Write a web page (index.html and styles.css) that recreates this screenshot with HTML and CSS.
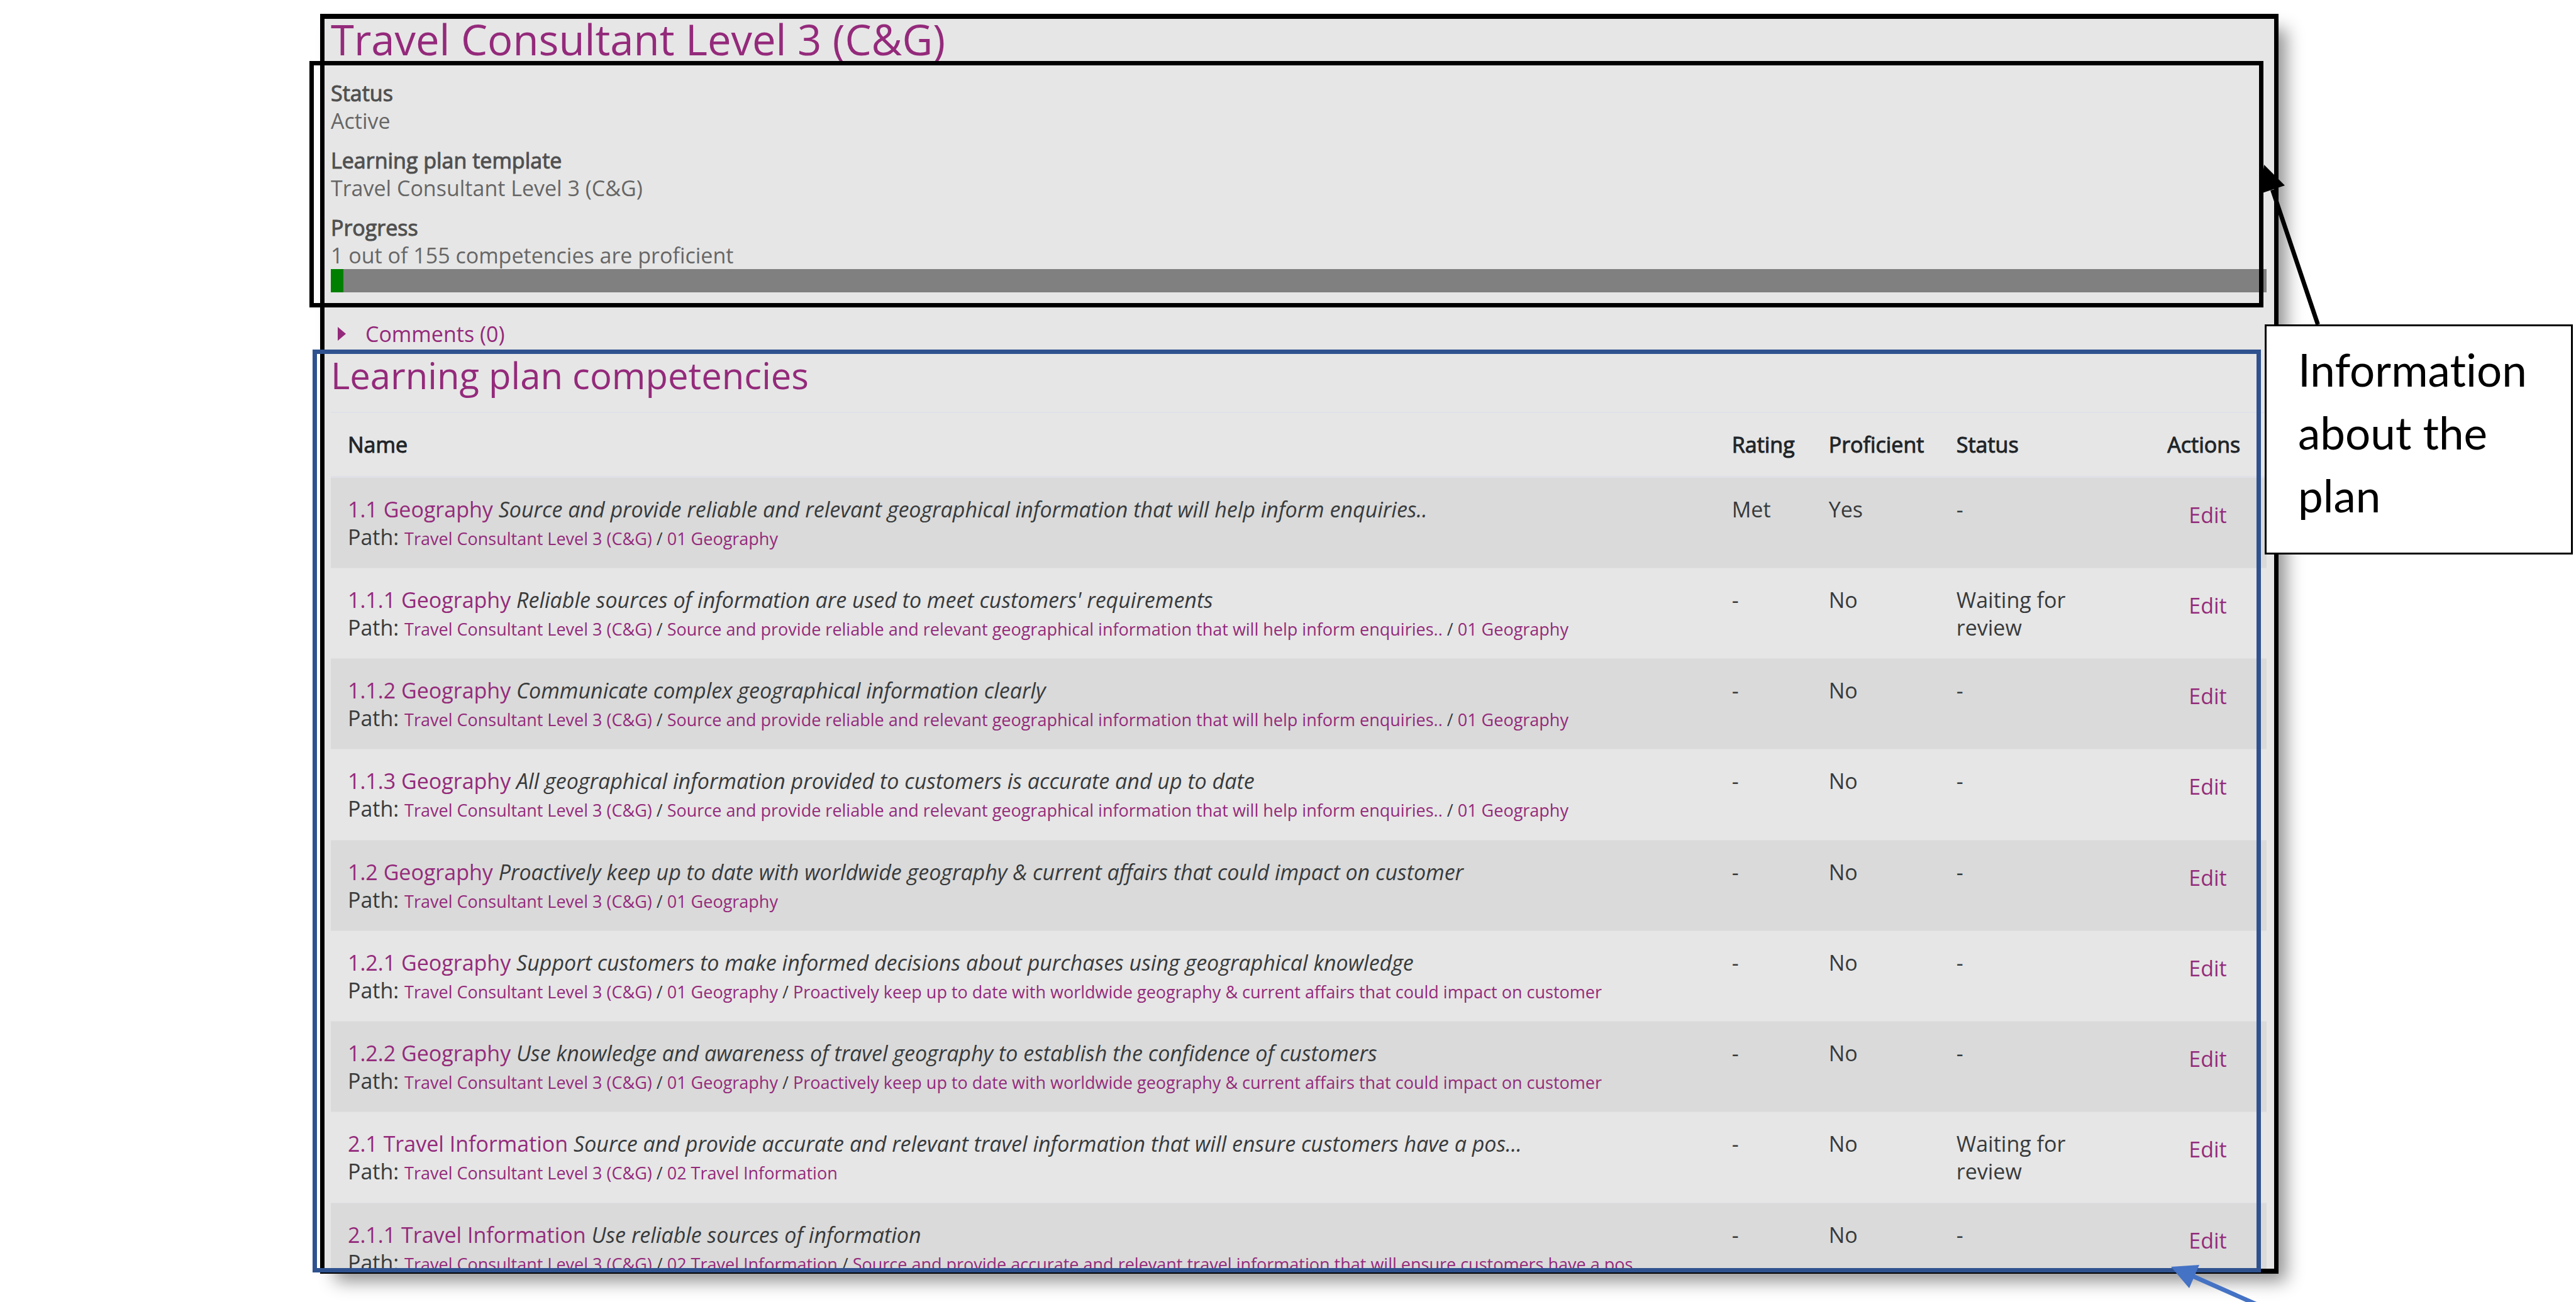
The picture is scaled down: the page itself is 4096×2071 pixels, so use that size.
FILE: index.html
```html
<!DOCTYPE html>
<html lang="en">
<head>
<meta charset="utf-8">
<title>Travel Consultant Level 3 (C&amp;G)</title>
<link rel="stylesheet" href="styles.css">
</head>
<body>
<div class="page">
  <main class="panel">
    <h1>Travel Consultant Level 3 (C&amp;G)</h1>
    <section class="info">
      <dl>
        <div><dt>Status</dt><dd>Active</dd></div>
        <div><dt>Learning plan template</dt><dd>Travel Consultant Level 3 (C&amp;G)</dd></div>
        <div><dt>Progress</dt><dd>1 out of 155 competencies are proficient</dd></div>
      </dl>
      <div class="bar"><div class="bar-fill" style="width:0.645%"></div></div>
    </section>
    <a class="comments" href="#"><svg viewBox="0 0 13 22" aria-hidden="true"><path d="M0 0L13 11L0 22Z"/></svg>Comments (0)</a>
    <section class="competencies">
      <div class="clip">
        <h2>Learning plan competencies</h2>
        <table>
          <colgroup><col class="c-name"><col class="c-rating"><col class="c-prof"><col class="c-status"><col class="c-actions"></colgroup>
          <thead>
            <tr><th>Name</th><th>Rating</th><th>Proficient</th><th>Status</th><th>Actions</th></tr>
          </thead>
          <tbody>
            <tr><td><a href="#">1.1 Geography</a> <em>Source and provide reliable and relevant geographical information that will help inform enquiries..</em><br>Path: <small><a href="#">Travel Consultant Level 3 (C&amp;G)</a> / <a href="#">01 Geography</a></small></td><td>Met</td><td>Yes</td><td>-</td><td><a class="edit" href="#">Edit</a></td></tr>
            <tr><td><a href="#">1.1.1 Geography</a> <em>Reliable sources of information are used to meet customers' requirements</em><br>Path: <small><a href="#">Travel Consultant Level 3 (C&amp;G)</a> / <a href="#">Source and provide reliable and relevant geographical information that will help inform enquiries..</a> / <a href="#">01 Geography</a></small></td><td>-</td><td>No</td><td>Waiting for<br>review</td><td><a class="edit" href="#">Edit</a></td></tr>
            <tr><td><a href="#">1.1.2 Geography</a> <em>Communicate complex geographical information clearly</em><br>Path: <small><a href="#">Travel Consultant Level 3 (C&amp;G)</a> / <a href="#">Source and provide reliable and relevant geographical information that will help inform enquiries..</a> / <a href="#">01 Geography</a></small></td><td>-</td><td>No</td><td>-</td><td><a class="edit" href="#">Edit</a></td></tr>
            <tr><td><a href="#">1.1.3 Geography</a> <em>All geographical information provided to customers is accurate and up to date</em><br>Path: <small><a href="#">Travel Consultant Level 3 (C&amp;G)</a> / <a href="#">Source and provide reliable and relevant geographical information that will help inform enquiries..</a> / <a href="#">01 Geography</a></small></td><td>-</td><td>No</td><td>-</td><td><a class="edit" href="#">Edit</a></td></tr>
            <tr><td><a href="#">1.2 Geography</a> <em>Proactively keep up to date with worldwide geography &amp; current affairs that could impact on customer</em><br>Path: <small><a href="#">Travel Consultant Level 3 (C&amp;G)</a> / <a href="#">01 Geography</a></small></td><td>-</td><td>No</td><td>-</td><td><a class="edit" href="#">Edit</a></td></tr>
            <tr><td><a href="#">1.2.1 Geography</a> <em>Support customers to make informed decisions about purchases using geographical knowledge</em><br>Path: <small><a href="#">Travel Consultant Level 3 (C&amp;G)</a> / <a href="#">01 Geography</a> / <a href="#">Proactively keep up to date with worldwide geography &amp; current affairs that could impact on customer</a></small></td><td>-</td><td>No</td><td>-</td><td><a class="edit" href="#">Edit</a></td></tr>
            <tr><td><a href="#">1.2.2 Geography</a> <em>Use knowledge and awareness of travel geography to establish the confidence of customers</em><br>Path: <small><a href="#">Travel Consultant Level 3 (C&amp;G)</a> / <a href="#">01 Geography</a> / <a href="#">Proactively keep up to date with worldwide geography &amp; current affairs that could impact on customer</a></small></td><td>-</td><td>No</td><td>-</td><td><a class="edit" href="#">Edit</a></td></tr>
            <tr><td><a href="#">2.1 Travel Information</a> <em>Source and provide accurate and relevant travel information that will ensure customers have a pos...</em><br>Path: <small><a href="#">Travel Consultant Level 3 (C&amp;G)</a> / <a href="#">02 Travel Information</a></small></td><td>-</td><td>No</td><td>Waiting for<br>review</td><td><a class="edit" href="#">Edit</a></td></tr>
            <tr><td><a href="#">2.1.1 Travel Information</a> <em>Use reliable sources of information</em><br>Path: <small><a href="#">Travel Consultant Level 3 (C&amp;G)</a> / <a href="#">02 Travel Information</a> / <a href="#">Source and provide accurate and relevant travel information that will ensure customers have a pos...</a></small></td><td>-</td><td>No</td><td>-</td><td><a class="edit" href="#">Edit</a></td></tr>
          </tbody>
        </table>
      </div>
    </section>
  </main>
  <svg class="arrow-info" viewBox="0 0 100 260" aria-hidden="true">
    <path d="M90.5 260L18.4 46" stroke="#000" stroke-width="7"/>
    <path d="M5 6L38 39L-1 52Z" fill="#000"/>
  </svg>
  <aside class="callout">Information about the plan</aside>
  <svg class="arrow-table" viewBox="0 0 160 61" aria-hidden="true">
    <path d="M36 19.500L150 70" stroke="#4472c4" stroke-width="7"/>
    <path d="M2 5L47 2L31 39Z" fill="#4472c4"/>
  </svg>
</div>
</body>
</html>
```
FILE: styles.css
```css
* { box-sizing: border-box; }

body {
  margin: 0;
  background: #fff;
  color: #373a3c;
  font: 34px/44px "Open Sans", "Noto Sans", sans-serif;
}

a { color: #942a7b; text-decoration: none; }

.page {
  position: relative;
  display: flex;
  height: 100vh;
  padding: 22px 473px 45px 509px;
  overflow: hidden;
}

.panel {
  flex: 1;
  min-width: 0;
  display: flex;
  flex-direction: column;
  padding: 0 12px 0 10px;
  background: #e6e6e6;
  border: solid #000;
  border-width: 8px 7px;
  box-shadow: 18px 18px 26px -6px rgba(0, 0, 0, 0.43);
}

h1, h2 { margin: 0; color: #942a7b; font-weight: 400; line-height: 65px; }
h1 { font-size: 67px; }
h2 { font-size: 58px; margin: 11px 0 26px; }

/* Highlight frames drawn over the two regions */
.info, .competencies { position: relative; }
.info::after, .competencies::after {
  content: "";
  position: absolute;
  pointer-events: none;
}
.info::after { inset: 2px 5px -24px -34px; border: 7px solid #000; }
.competencies::after { inset: 3px 9px -6px -29px; border: 7px solid #2f528f; }

.info { padding-top: 31px; color: #666; }
dl { display: grid; gap: 19px; margin: 0; }
dd { margin: 0; }

/* Labels are the regular face, thickened, so they keep its widths */
dt, th { font-weight: 400; -webkit-text-stroke: 1px currentColor; }
dt { color: #505050; }

.bar { height: 37px; background: #808080; }
.bar-fill { height: 100%; background: #008000; }

.comments {
  display: flex;
  align-items: center;
  gap: 31px;
  margin-top: 44px;
  padding-left: 11px;
}
.comments svg { width: 13px; height: 22px; fill: currentColor; }

.competencies { flex: 1; min-height: 0; }
.clip { height: 100%; overflow: hidden; }

table { width: 100%; table-layout: fixed; border-spacing: 0; }
.c-name { width: 71.5%; }
.c-rating { width: 5%; }
.c-prof { width: 6.6%; }
.c-status { width: 10.9%; }
.c-actions { width: 6%; }

th, td { padding: 28px 0 28px 27px; text-align: left; vertical-align: top; white-space: nowrap; }
th {
  color: #212529;
  border-top: 2px solid #dfe0e8;
  border-bottom: 3px solid #dfe0e8;
}
tbody td { padding-bottom: 27px; border-bottom: 1px solid #dfe0e4; }
tbody tr:nth-child(4n) td { padding-bottom: 28px; }
tbody tr:nth-child(odd) td { background: #dadada; }
small { font-size: 27px; line-height: 1; }
.edit { display: block; padding: 9px 0 0 34px; }

.callout {
  position: absolute;
  top: 516px;
  right: 5px;
  width: 490px;
  height: 366px;
  padding: 19px 50px;
  background: #fff;
  border: 3px solid #000;
  color: #000;
  font: 71px/100px Lato, sans-serif;
  font-variant-ligatures: none;
}

.arrow-info { position: absolute; top: 256px; right: 401px; width: 100px; height: 260px; overflow: visible; }
.arrow-table { position: absolute; bottom: 0; right: 486px; width: 160px; height: 61px; overflow: visible; }
```
